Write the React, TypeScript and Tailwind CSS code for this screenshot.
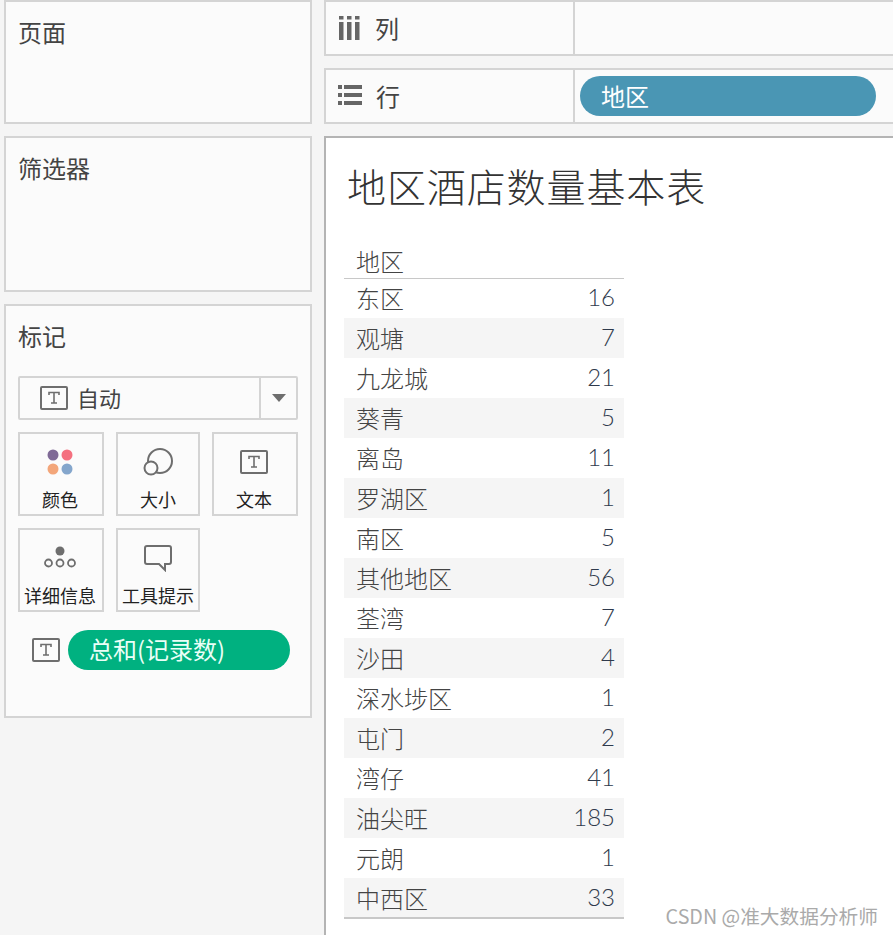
import type { ReactNode } from 'react'

const rows: [string, number][] = [
  ['东区', 16],
  ['观塘', 7],
  ['九龙城', 21],
  ['葵青', 5],
  ['离岛', 11],
  ['罗湖区', 1],
  ['南区', 5],
  ['其他地区', 56],
  ['荃湾', 7],
  ['沙田', 4],
  ['深水埗区', 1],
  ['屯门', 2],
  ['湾仔', 41],
  ['油尖旺', 185],
  ['元朗', 1],
  ['中西区', 33],
]

function TextIcon({ className = '' }: { className?: string }) {
  return (
    <svg width="28" height="24" viewBox="0 0 28 24" fill="none" className={className}>
      <rect x="1" y="1" width="26" height="22" stroke="#6e6e6e" strokeWidth="2" rx="1" />
      <path d="M9 9V6.5H19V9M14 6.5V17M11 17H17" stroke="#6e6e6e" strokeWidth="1.6" />
    </svg>
  )
}

function MarkCard({ label, icon, narrow }: { label: string; icon: ReactNode; narrow?: boolean }) {
  return (
    <div className={`${narrow ? 'w-[84px]' : 'w-[86px] pr-[2px]'} h-[84px] border-2 border-[#d4d4d4] flex flex-col items-center`}>
      <div className="h-[50px] w-full flex items-center justify-center pt-[6px]">{icon}</div>
      <div className="mt-[2px] text-[18px] leading-[26px] text-[#222] whitespace-nowrap">{label}</div>
    </div>
  )
}

export default function App() {
  return (
    <div className="w-[893px] h-[935px] overflow-hidden bg-[#f5f5f5] flex font-['Noto_Sans_CJK_SC','Noto_Sans',sans-serif]">
      {/* Left cards */}
      <div className="w-[308px] ml-[4px] flex flex-col gap-[12px] shrink-0 text-[#444]">
        <div className="h-[124px] border-2 border-[#d4d4d4] bg-[#fbfbfb] pl-[12px] pt-[14px] text-[24px] leading-[32px]">页面</div>
        <div className="h-[156px] border-2 border-[#d4d4d4] bg-[#fbfbfb] pl-[12px] pt-[14px] text-[24px] leading-[32px]">筛选器</div>
        <div className="h-[414px] border-2 border-[#d4d4d4] bg-[#fbfbfb] pl-[12px] pt-[14px]">
          <div className="text-[24px] leading-[32px]">标记</div>
          <div className="mt-[24px] w-[280px] h-[44px] border-2 border-[#d4d4d4] rounded-[2px] flex items-center">
            <div className="flex-1 flex items-center pl-[20px] gap-[9px] border-r-2 border-[#d4d4d4] h-full">
              <TextIcon />
              <span className="text-[22px] leading-none -mt-[2px]">自动</span>
            </div>
            <div className="w-[35px] flex justify-center">
              <div className="w-0 h-0 border-l-[7px] border-r-[7px] border-t-[8px] border-l-transparent border-r-transparent border-t-[#6e6e6e]" />
            </div>
          </div>
          <div className="mt-[12px] flex gap-[12px]">
            <MarkCard
              label="颜色"
              icon={
                <svg width="26" height="26" viewBox="0 0 26 26">
                  <circle cx="6" cy="6" r="5.5" fill="#7f6a96" />
                  <circle cx="20" cy="6" r="5.5" fill="#f4707f" />
                  <circle cx="6" cy="20" r="5.5" fill="#f3a67a" />
                  <circle cx="20" cy="20" r="5.5" fill="#84a6cc" />
                </svg>
              }
            />
            <MarkCard
              narrow
              label="大小"
              icon={
                <svg width="30" height="28" viewBox="0 0 30 28" fill="none" stroke="#6e6e6e" strokeWidth="2">
                  <circle cx="17" cy="13" r="12" />
                  <circle cx="8" cy="20" r="6.5" fill="#fbfbfb" />
                </svg>
              }
            />
            <MarkCard label="文本" icon={<TextIcon />} />
          </div>
          <div className="mt-[12px] flex gap-[12px]">
            <MarkCard
              label="详细信息"
              icon={
                <svg width="32" height="24" viewBox="0 0 32 24" fill="none" stroke="#6e6e6e" strokeWidth="1.8">
                  <circle cx="16" cy="5" r="4.5" fill="#6e6e6e" stroke="none" />
                  <circle cx="4.5" cy="17" r="3.5" />
                  <circle cx="16" cy="17" r="3.5" />
                  <circle cx="27.5" cy="17" r="3.5" />
                </svg>
              }
            />
            <MarkCard
              narrow
              label="工具提示"
              icon={
                <svg width="28" height="27" viewBox="0 0 28 27" fill="none" stroke="#6e6e6e" strokeWidth="2">
                  <path d="M3 1H25Q27 1 27 3V17Q27 19 25 19H21V25L15 19H3Q1 19 1 17V3Q1 1 3 1Z" />
                </svg>
              }
            />
          </div>
          <div className="mt-[18px] ml-[14px] flex items-center gap-[8px]">
            <TextIcon />
            <div className="w-[222px] h-[40px] rounded-[20px] bg-[#00b180] text-[#eafff7] text-[24px] leading-[38px] pl-[21px] whitespace-nowrap">
              总和(记录数)
            </div>
          </div>
        </div>
      </div>

      {/* Right side */}
      <div className="ml-[12px] flex-1 min-w-0 flex flex-col text-[#444]">
        <div className="h-[56px] border-2 border-r-0 border-[#d4d4d4] bg-[#fbfbfb] flex">
          <div className="w-[249px] border-r-2 border-[#d4d4d4] flex items-center pl-[12px] gap-[15px]">
            <svg width="22" height="24" viewBox="0 0 22 24" fill="#666">
              <rect x="1" y="0" width="4.5" height="3.5" />
              <rect x="1" y="6" width="4.5" height="18" />
              <rect x="9" y="0" width="4.5" height="3.5" />
              <rect x="9" y="6" width="4.5" height="18" />
              <rect x="17" y="0" width="4.5" height="3.5" />
              <rect x="17" y="6" width="4.5" height="18" />
            </svg>
            <span className="text-[24px] leading-none">列</span>
          </div>
        </div>
        <div className="mt-[12px] h-[56px] border-2 border-r-0 border-[#d4d4d4] bg-[#fbfbfb] flex">
          <div className="w-[249px] border-r-2 border-[#d4d4d4] flex items-center pl-[12px] gap-[14px]">
            <svg width="24" height="22" viewBox="0 0 24 22" fill="#666" className="-mt-[2px]">
              <rect x="0" y="1" width="4" height="4" />
              <rect x="6" y="1" width="18" height="4" />
              <rect x="0" y="9" width="4" height="4" />
              <rect x="6" y="9" width="18" height="4" />
              <rect x="0" y="17" width="4" height="4" />
              <rect x="6" y="17" width="18" height="4" />
            </svg>
            <span className="text-[24px] leading-none">行</span>
          </div>
          <div className="pl-[5px] flex items-center">
            <div className="w-[296px] h-[40px] rounded-[20px] bg-[#4a96b4] text-white text-[24px] leading-[40px] pl-[21px]">地区</div>
          </div>
        </div>

        {/* View */}
        <div className="mt-[12px] flex-1 relative border-l-2 border-t-2 border-[#b4b4b4] bg-white pl-[18px] pt-[22px]">
          <div className="text-[39px] leading-[50px] font-light text-[#333] pl-[3px] whitespace-nowrap tracking-[0.9px]">地区酒店数量基本表</div>
          <div className="mt-[39px] w-[280px]">
            <div className="relative h-[30px] -mb-px border-b border-[#c8c8c8] pl-[12px] text-[24px] leading-[24px] font-light text-[#444]">地区</div>
            {rows.map(([name, value], i) => (
              <div
                key={name}
                className={`h-[40px] flex items-center justify-between pl-[12px] pr-[9px] ${i % 2 === 1 ? 'bg-[#f5f5f5]' : 'bg-white'}`}
              >
                <span className="text-[24px] leading-none font-light text-[#444]">{name}</span>
                <span className="text-[24px] leading-none -mt-[2px] font-['Lato',sans-serif] font-light text-[#2f3a4c]">{value}</span>
              </div>
            ))}
            <div className="h-[2px] bg-[#c8c8c8] -mt-px relative" />
          </div>
          <div className="absolute right-[15px] bottom-[6px] text-[19.7px] leading-[26px] text-[#aaa] whitespace-nowrap">CSDN @准大数据分析师</div>
        </div>
      </div>
    </div>
  )
}
